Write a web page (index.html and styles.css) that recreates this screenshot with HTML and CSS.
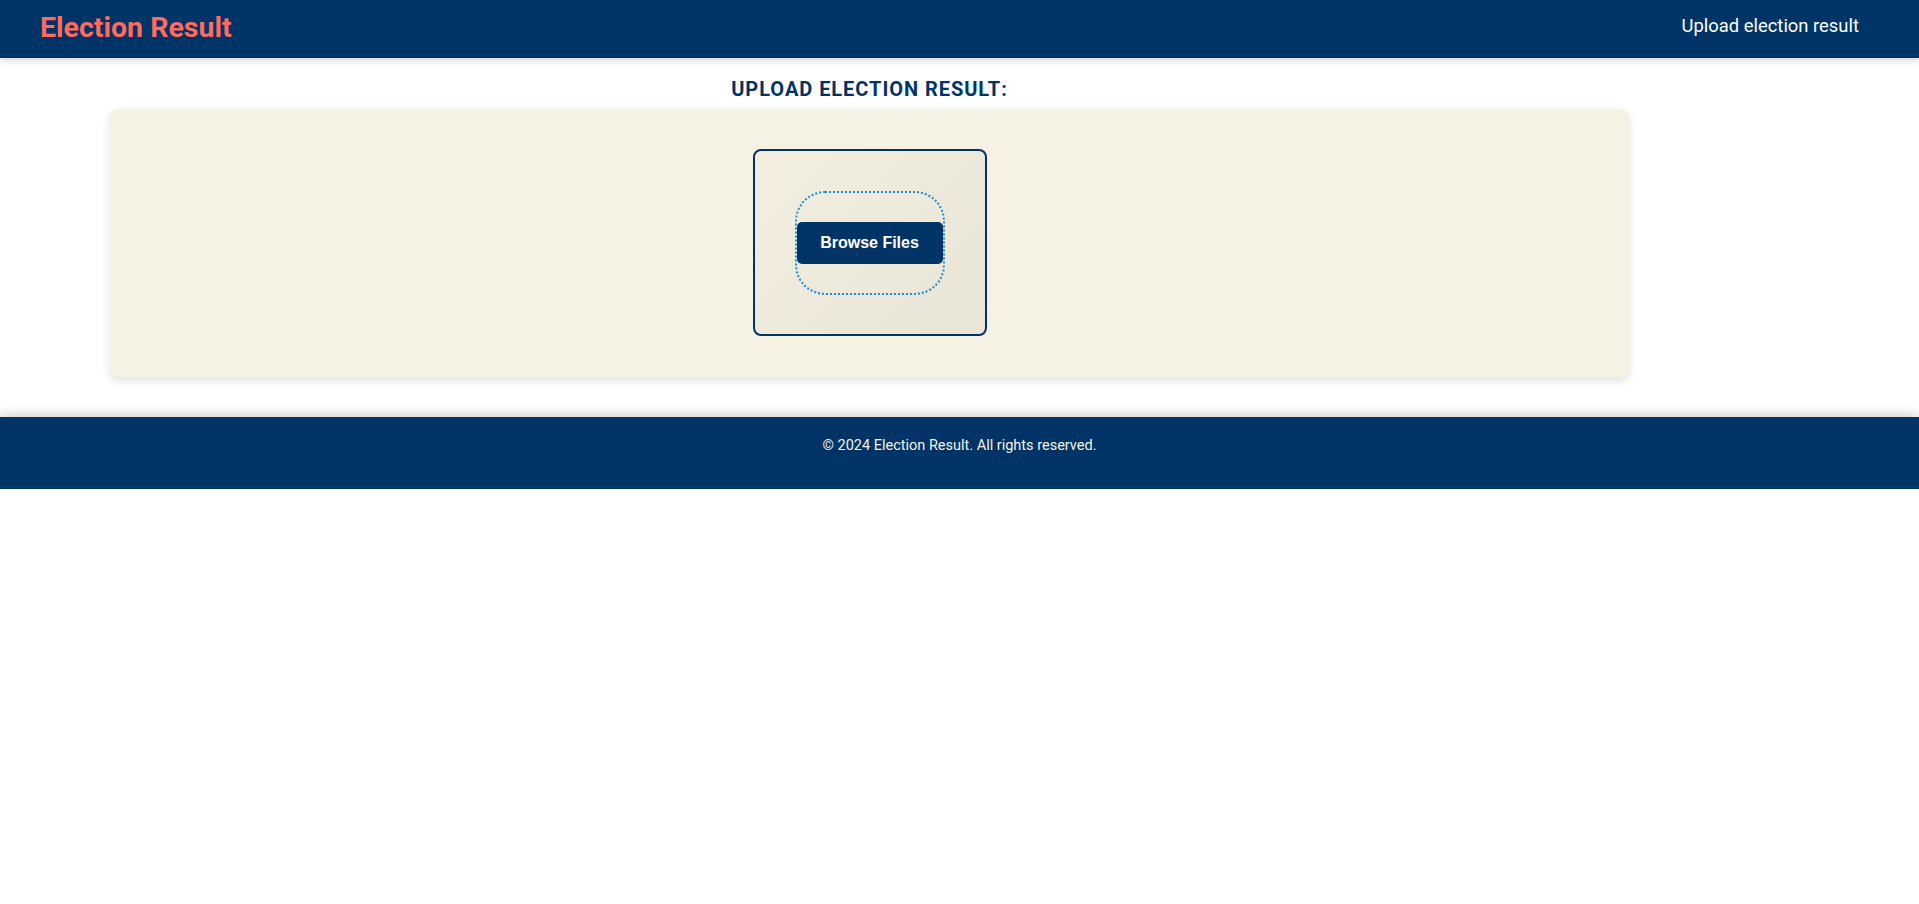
FILE: index.html
```html
<!DOCTYPE html>
<html lang="en">
<head>
<meta charset="utf-8">
<title>Election Result</title>
<link rel="stylesheet" href="styles.css">
</head>
<body>
<header class="site-header">
  <div class="brand">Election Result</div>
  <nav class="nav"><a href="#" class="nav-link">Upload election result</a></nav>
</header>
<main class="main">
  <section class="upload-section">
    <h2 class="section-title">UPLOAD ELECTION RESULT:</h2>
    <div class="upload-card">
      <div class="drop-box">
        <div class="focus-ring">
          <button class="browse-btn" type="button">Browse Files</button>
        </div>
      </div>
    </div>
  </section>
</main>
<footer class="site-footer">
  <p class="footer-text">© 2024 Election Result. All rights reserved.</p>
</footer>
</body>
</html>
```
FILE: styles.css
```css
* { box-sizing: border-box; }
html, body { margin: 0; padding: 0; background: #ffffff; }
body { font-family: Roboto, "Liberation Sans", Arial, sans-serif; }

.site-header {
  height: 58px;
  background: #003366;
  display: flex;
  align-items: center;
  justify-content: space-between;
  padding: 0 60px 0 40px;
  box-shadow: 0 2px 8px rgba(0, 0, 0, 0.18);
  position: relative;
  z-index: 2;
}
.brand {
  color: #ff6b5e;
  font-weight: 700;
  font-size: 28.5px;
  line-height: 1;
  margin-top: -2px;
}
.nav-link {
  color: #ffffff;
  text-decoration: none;
  font-size: 18.4px;
  line-height: 1;
  display: block;
  margin-top: -5px;
}

.main {
  padding: 0 0 40px 0;
}
.upload-section {
  width: 1519px;
  margin-left: 110px;
}
.section-title {
  margin: 0;
  height: 51px;
  padding-top: 20px;
  text-align: center;
  color: #003366;
  font-size: 20px;
  font-weight: 700;
  letter-spacing: 0.95px;
  line-height: 22px;
}
.upload-card {
  background: #f6f2e3;
  border-radius: 8px;
  box-shadow: 0 4px 10px rgba(0, 0, 0, 0.12);
  height: 268px;
  display: flex;
  justify-content: center;
  padding-top: 40px;
}
.drop-box {
  width: 234px;
  height: 187px;
  border: 2px solid #003366;
  border-radius: 8px;
  background: linear-gradient(135deg, #f3efe0 0%, #e9e5d6 100%);
  display: flex;
  align-items: center;
  justify-content: center;
}
.focus-ring {
  width: 150px;
  height: 104px;
  border: 2px dotted #1f8ad6;
  border-radius: 30px;
  display: flex;
  align-items: center;
  justify-content: center;
}
.browse-btn {
  width: 146px;
  height: 42px;
  background: #003366;
  color: #ffffff;
  border: none;
  border-radius: 5px;
  font-family: "Liberation Sans", Arial, sans-serif;
  font-weight: 700;
  font-size: 16px;
  padding: 0;
}

.site-footer {
  background: #003366;
  height: 72px;
  box-shadow: 0 -3px 10px rgba(0, 0, 0, 0.18);
  position: relative;
  padding-top: 20px;
}
.footer-text {
  margin: 0;
  text-align: center;
  color: #f6f2e3;
  font-size: 14.5px;
  line-height: 18px;
}
```
